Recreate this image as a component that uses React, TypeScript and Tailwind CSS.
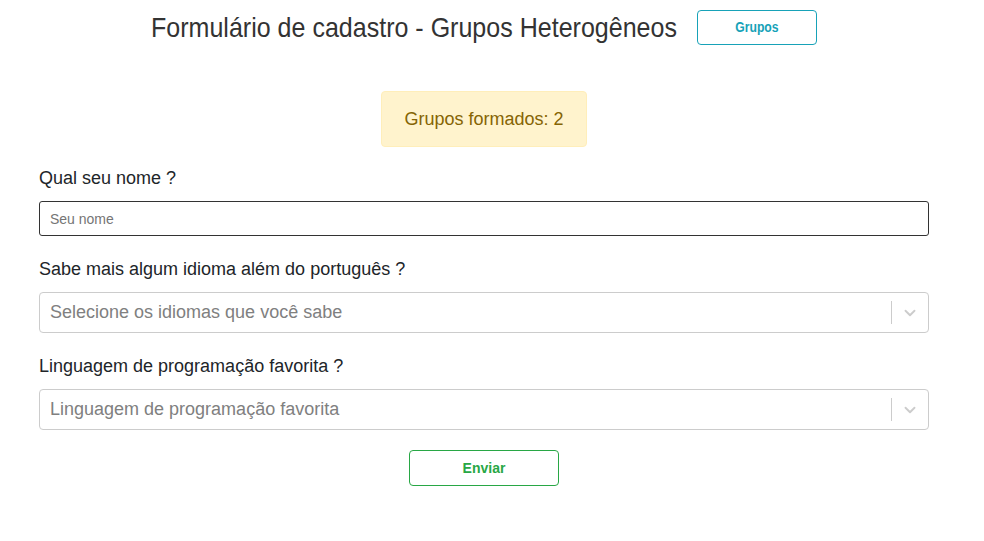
import { ChevronDown } from "lucide-react";

function SelectBox({ placeholder }: { placeholder: string }) {
  return (
    <div className="flex h-[41px] w-full items-center rounded-[4px] border border-[#cccccc] bg-white">
      <span className="flex-1 truncate pl-[10px] text-[18px] text-[#808080]">{placeholder}</span>
      <span className="h-[23px] w-px bg-[#cccccc]" />
      <span className="flex w-[36px] items-center justify-center text-[#cccccc]">
        <ChevronDown size={18} strokeWidth={2.5} />
      </span>
    </div>
  );
}

export default function App() {
  return (
    <div className="min-h-[541px] w-[984px] bg-white font-['Liberation_Sans',Arial,sans-serif] text-[#212529]">
      <div className="ml-[39px] w-[890px]">
        <header className="flex items-center justify-center gap-[21px] pt-[10px]">
          <h1 className="w-[525px] whitespace-nowrap text-[28px] leading-[35px] text-[#333333]">
            <span className="inline-block origin-left scale-x-[0.894]">
              Formulário de cadastro - Grupos Heterogêneos
            </span>
          </h1>
          <button className="h-[35px] w-[120px] rounded-[4px] border border-[#17a2b8] text-[14px] font-bold text-[#17a2b8]">
            <span className="inline-block scale-x-[0.87]">Grupos</span>
          </button>
        </header>

        <div className="mt-[46px] flex justify-center">
          <div className="flex h-[56px] w-[206px] items-center justify-center rounded-[4px] border border-[#ffeeba] bg-[#fff3cd] text-[18px] text-[#856404]">
            Grupos formados: 2
          </div>
        </div>

        <form className="mt-[19px] flex flex-col" onSubmit={(e) => e.preventDefault()}>
          <label className="text-[18px] leading-[24px]">Qual seu nome ?</label>
          <input
            placeholder="Seu nome"
            className="mt-[11px] h-[35px] w-full rounded-[3px] border border-[#333333] px-[10px] text-[14px] placeholder:text-[#757575]"
          />

          <label className="mt-[21px] text-[18px] leading-[24px]">Sabe mais algum idioma além do português ?</label>
          <div className="mt-[11px]">
            <SelectBox placeholder="Selecione os idiomas que você sabe" />
          </div>

          <label className="mt-[21px] text-[18px] leading-[24px]">Linguagem de programação favorita ?</label>
          <div className="mt-[11px]">
            <SelectBox placeholder="Linguagem de programação favorita" />
          </div>

          <div className="mt-[20px] flex justify-center">
            <button className="h-[36px] w-[150px] rounded-[4px] border border-[#28a745] text-[14px] font-bold text-[#28a745]">
              Enviar
            </button>
          </div>
        </form>
      </div>
    </div>
  );
}
